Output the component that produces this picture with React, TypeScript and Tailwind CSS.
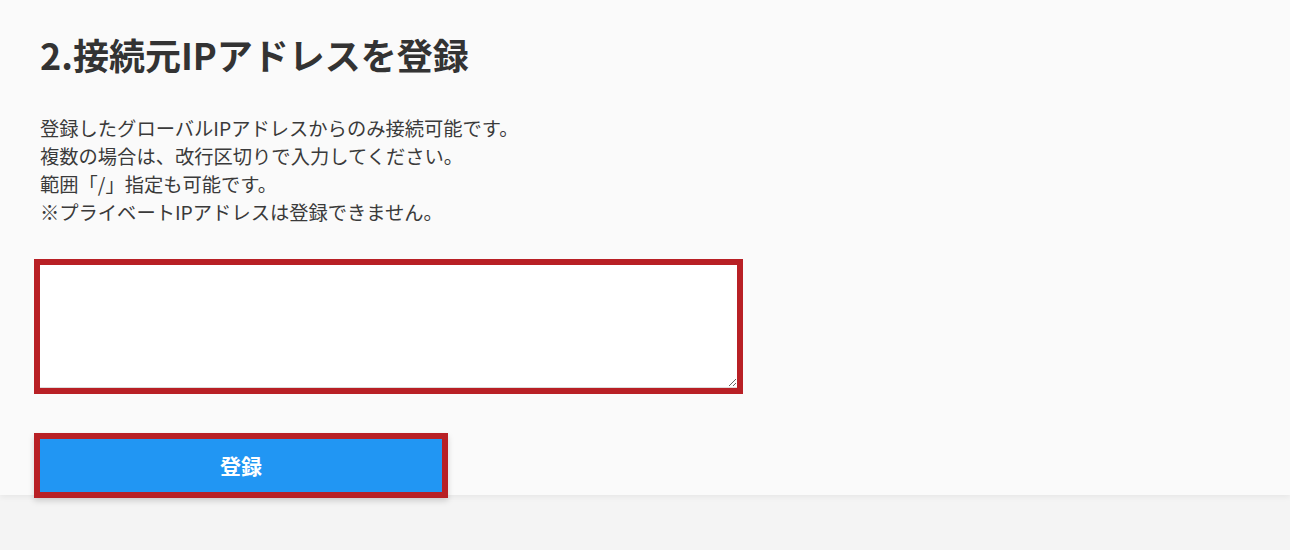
export default function App() {
  const font = { fontFamily: '"Noto Sans CJK JP", "Noto Sans", sans-serif' };
  return (
    <div className="min-h-[550px] bg-[#f4f4f4] text-[#333]" style={font}>
      <section className="bg-[#fafafa] h-[495px] pl-[34px] pt-[29px] shadow-[0_2px_6px_rgba(0,0,0,0.06)]">
        <h1 className="pl-[6px] text-[36px] leading-[50px] font-bold text-[#333]">
          2.接続元IPアドレスを登録
        </h1>
        <div className="pl-[6px] mt-[35px] text-[19.3px] leading-[28px] text-[#3a3a3a]">
          <p>登録したグローバルIPアドレスからのみ接続可能です。</p>
          <p>複数の場合は、改行区切りで入力してください。</p>
          <p>範囲「/」指定も可能です。</p>
          <p>※プライベートIPアドレスは登録できません。</p>
        </div>
        <div className="mt-[33px] w-[709px] h-[135px] border-[6px] border-[#b82025] bg-white">
          <textarea className="block w-full h-full resize border-0 border-b border-[#ddd] bg-white outline-none text-[16px] p-2" />
        </div>
        <div className="relative z-10 mt-[39px] w-[414px] h-[65px] border-[6px] border-[#b82025] shadow-[0_3px_6px_rgba(0,0,0,0.15)]">
          <button className="w-full h-full bg-[#2196f3] text-white text-[21px] font-bold">
            登録
          </button>
        </div>
      </section>
    </div>
  );
}
